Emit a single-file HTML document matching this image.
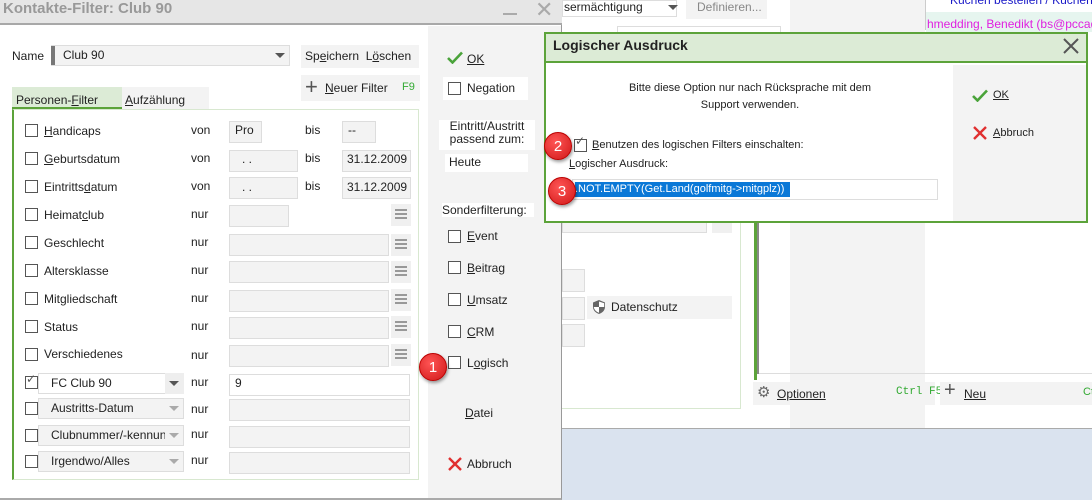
<!DOCTYPE html>
<html><head><meta charset="utf-8"><style>
*{box-sizing:border-box;margin:0;padding:0}
body{width:1092px;height:500px;position:relative;overflow:hidden;background:#fff;font-family:"Liberation Sans",sans-serif;font-size:12px;color:#222}
.a{position:absolute;white-space:nowrap}
.cb{position:absolute;width:13px;height:13px;border:1px solid #555;background:#fff}
.fld{position:absolute;background:#f3f3f3;border:1px solid #ddd}
.menu{position:absolute;width:20px;height:22px;background:#f0f0f0}
.menu:before{content:"";position:absolute;left:4px;top:5px;width:12px;height:10px;border-top:2px solid #999;border-bottom:2px solid #999;box-sizing:border-box}
.menu:after{content:"";position:absolute;left:4px;top:9px;width:12px;height:2px;background:#999}
.u{text-decoration:underline}
.badge{position:absolute;width:28px;height:28px;border-radius:50%;background:radial-gradient(circle at 40% 35%,#f55,#d01818);color:#fff;font-size:15px;text-align:center;line-height:28px;box-shadow:1px 2px 3px rgba(0,0,0,.4);border:1px solid #b00}
.tri{position:absolute;width:0;height:0;border-left:5px solid transparent;border-right:5px solid transparent;border-top:5px solid #555}
</style></head><body>

<!-- background window -->
<div class="a" style="left:562px;top:428px;width:530px;height:72px;background:#dae3ef;border-top:1px solid #aaa"></div>
<div class="a" style="left:562px;top:0;width:115px;height:17px;border:1px solid #ddd;background:#fff"></div>
<div class="a" style="left:564px;top:0;font-size:12px">sermächtigung</div>
<div class="tri" style="left:668px;top:5px"></div>
<div class="a" style="left:686px;top:0;width:81px;height:19px;background:#f3f3f3;color:#888;padding-left:11px">Definieren...</div>
<div class="a" style="left:790px;top:0;width:135px;height:428px;background:#f3f3f3"></div>
<div class="a" style="left:925px;top:0;width:1px;height:30px;background:#ccc"></div>
<div class="a" style="left:950px;top:-7px;color:#1a1ac8;font-size:12px">Küchen bestellen / Küchen</div>
<div class="a" style="left:926px;top:12px;width:166px;height:20px;background:#e6f5ef"></div>
<div class="a" style="left:927px;top:17px;color:#e020e0;font-size:12px">hmedding, Benedikt (bs@pccado</div>
<div class="a" style="left:617px;top:26px;width:164px;height:10px;border:1px solid #ddd"></div>
<div class="a" style="left:562px;top:36px;width:179px;height:373px;border-right:1px solid #d8e8d0;border-bottom:1px solid #d8e8d0"></div>
<div class="fld" style="left:562px;top:220px;width:145px;height:13px"></div>
<div class="a" style="left:712px;top:220px;width:20px;height:13px;background:#f0f0f0"></div>
<div class="fld" style="left:562px;top:269px;width:23px;height:23px"></div>
<div class="fld" style="left:562px;top:297px;width:23px;height:23px"></div>
<div class="fld" style="left:562px;top:324px;width:23px;height:23px"></div>
<div class="a" style="left:587px;top:296px;width:145px;height:23px;background:#f3f3f3"></div>
<svg class="a" style="left:592px;top:299px" width="14" height="16" viewBox="0 0 14 16"><path d="M7 1L1 3.5V8c0 3.5 3 6 6 7 3-1 6-3.5 6-7V3.5z" fill="#666"/><path d="M7 2.5V8H1.8c.3 2.8 2.6 4.8 5.2 5.8V8h5.2V4.2z" fill="#fff"/></svg>
<div class="a" style="left:611px;top:300px;font-size:12px">Datenschutz</div>
<div class="a" style="left:754px;top:222px;width:3px;height:158px;background:#5ca33a"></div>
<div class="a" style="left:757px;top:222px;width:2px;height:152px;background:#888"></div>
<div class="a" style="left:759px;top:373px;width:333px;height:1px;background:#ddd"></div>
<div class="a" style="left:753px;top:382px;width:182px;height:23px;background:#f3f3f3"></div>
<div class="a" style="left:757px;top:383px;color:#666;font-size:15px">⚙</div>
<div class="a u" style="left:777px;top:387px">Optionen</div>
<div class="a" style="left:896px;top:386px;color:#3a3;font-family:'Liberation Mono',monospace;font-size:11px">Ctrl F5</div>
<div class="a" style="left:940px;top:382px;width:152px;height:23px;background:#f3f3f3"></div>
<div class="a" style="left:944px;top:379px;font-size:20px;color:#555">+</div>
<div class="a u" style="left:964px;top:387px">Neu</div>
<div class="a" style="left:1083px;top:386px;color:#3a3;font-size:11px">Ct</div>

<!-- main dialog -->
<div class="a" style="left:0;top:0;width:562px;height:500px;background:#fff;border-right:1px solid #999;border-bottom:2px solid #aaa"></div>
<div class="a" style="left:0;top:0;width:562px;height:25px;background:#e6e6e6;border-bottom:2px solid #a8a8a8"></div>
<div class="a" style="left:3px;top:0;font-size:15px;font-weight:bold;color:#999">Kontakte-Filter: Club 90</div>
<div class="a" style="left:503px;top:13px;width:14px;height:2px;background:#aaa"></div>
<div class="a" style="left:535px;top:-3px;font-size:22px;color:#aaa">✕</div>
<div class="a" style="left:428px;top:26px;width:133px;height:472px;background:#f3f3f3"></div>

<div class="a" style="left:12px;top:49px">Name</div>
<div class="a" style="left:51px;top:45px;width:239px;height:21px;background:#f3f3f3;border:1px solid #ddd"></div>
<div class="a" style="left:51px;top:46px;width:4px;height:19px;background:#777"></div>
<div class="a" style="left:63px;top:48px">Club 90</div>
<div class="tri" style="left:275px;top:53px"></div>
<div class="a" style="left:301px;top:45px;width:118px;height:23px;background:#f3f3f3"></div>
<div class="a" style="left:305px;top:49px;font-size:12px">Sp<span class="u">e</span>ichern&nbsp; L<span class="u">ö</span>schen</div>
<div class="a" style="left:301px;top:75px;width:119px;height:26px;background:#f3f3f3"></div>
<div class="a" style="left:305px;top:74px;font-size:22px;color:#555">+</div>
<div class="a" style="left:325px;top:81px"><span class="u">N</span>euer Filter</div>
<div class="a" style="left:402px;top:81px;color:#3a3;font-size:11px">F9</div>

<div class="a" style="left:12px;top:87px;width:110px;height:22px;background:#dcebd6;border-bottom:2px solid #5ca33a"></div>
<div class="a" style="left:16px;top:93px">Personen-<span class="u">F</span>ilter</div>
<div class="a" style="left:122px;top:87px;width:87px;height:22px;background:#f3f3f3"></div>
<div class="a" style="left:125px;top:93px"><span class="u">A</span>ufzählung</div>
<div class="a" style="left:12px;top:109px;width:407px;height:371px;border:1px solid #d8e8d0;border-left:2px solid #5ca33a"></div>

<!-- rows -->
<div class="cb" style="left:25px;top:124px"></div><div class="a" style="left:44px;top:124px"><span class="u">H</span>andicaps</div>
<div class="a" style="left:191px;top:123px">von</div><div class="fld" style="left:229px;top:121px;width:33px;height:22px"></div><div class="a" style="left:235px;top:123px">Pro</div>
<div class="a" style="left:305px;top:123px">bis</div><div class="fld" style="left:342px;top:121px;width:34px;height:22px"></div><div class="a" style="left:348px;top:123px">--</div>

<div class="cb" style="left:25px;top:152px"></div><div class="a" style="left:44px;top:152px"><span class="u">G</span>eburtsdatum</div>
<div class="a" style="left:191px;top:151px">von</div><div class="fld" style="left:229px;top:150px;width:69px;height:22px"></div><div class="a" style="left:242px;top:152px">. .</div>
<div class="a" style="left:305px;top:151px">bis</div><div class="fld" style="left:342px;top:150px;width:69px;height:22px"></div><div class="a" style="left:347px;top:152px">31.12.2009</div>

<div class="cb" style="left:25px;top:180px"></div><div class="a" style="left:44px;top:180px">Eintritts<span class="u">d</span>atum</div>
<div class="a" style="left:191px;top:179px">von</div><div class="fld" style="left:229px;top:177px;width:69px;height:22px"></div><div class="a" style="left:242px;top:180px">. .</div>
<div class="a" style="left:305px;top:179px">bis</div><div class="fld" style="left:342px;top:177px;width:69px;height:22px"></div><div class="a" style="left:347px;top:180px">31.12.2009</div>

<div class="cb" style="left:25px;top:208px"></div><div class="a" style="left:44px;top:208px">Heimat<span class="u">c</span>lub</div>
<div class="a" style="left:191px;top:207px">nur</div><div class="fld" style="left:229px;top:205px;width:60px;height:22px"></div><div class="menu" style="left:391px;top:204px"></div>

<div class="cb" style="left:25px;top:236px"></div><div class="a" style="left:44px;top:236px">Geschlecht</div>
<div class="a" style="left:191px;top:235px">nur</div><div class="fld" style="left:229px;top:234px;width:160px;height:22px"></div><div class="menu" style="left:391px;top:234px"></div>

<div class="cb" style="left:25px;top:264px"></div><div class="a" style="left:44px;top:264px">Altersklasse</div>
<div class="a" style="left:191px;top:263px">nur</div><div class="fld" style="left:229px;top:261px;width:160px;height:22px"></div><div class="menu" style="left:391px;top:261px"></div>

<div class="cb" style="left:25px;top:292px"></div><div class="a" style="left:44px;top:292px">Mitgliedschaft</div>
<div class="a" style="left:191px;top:291px">nur</div><div class="fld" style="left:229px;top:290px;width:160px;height:22px"></div><div class="menu" style="left:391px;top:289px"></div>

<div class="cb" style="left:25px;top:320px"></div><div class="a" style="left:44px;top:320px">Status</div>
<div class="a" style="left:191px;top:319px">nur</div><div class="fld" style="left:229px;top:317px;width:160px;height:22px"></div><div class="menu" style="left:391px;top:316px"></div>

<div class="cb" style="left:25px;top:348px"></div><div class="a" style="left:44px;top:347px">Verschiedenes</div>
<div class="a" style="left:191px;top:348px">nur</div><div class="fld" style="left:229px;top:345px;width:160px;height:22px"></div><div class="menu" style="left:391px;top:344px"></div>

<div class="cb" style="left:25px;top:376px"></div><div class="a" style="left:26px;top:372px;color:#555">✓</div>
<div class="a" style="left:38px;top:373px;width:146px;height:21px;background:#fff;border:1px solid #ddd"></div><div class="a" style="left:165px;top:373px;width:19px;height:21px;background:#eee"></div>
<div class="a" style="left:51px;top:376px">FC Club 90</div><div class="tri" style="left:169px;top:381px"></div>
<div class="a" style="left:191px;top:375px">nur</div><div class="a" style="left:229px;top:374px;width:181px;height:22px;border:1px solid #ddd"></div><div class="a" style="left:235px;top:376px">9</div>

<div class="cb" style="left:25px;top:402px"></div><div class="fld" style="left:38px;top:398px;width:146px;height:21px"></div>
<div class="a" style="left:51px;top:401px">Austritts-Datum</div><div class="tri" style="left:169px;top:406px;border-top-color:#aaa"></div>
<div class="a" style="left:191px;top:402px">nur</div><div class="fld" style="left:229px;top:399px;width:181px;height:22px"></div>

<div class="cb" style="left:25px;top:429px"></div><div class="fld" style="left:38px;top:425px;width:146px;height:21px"></div>
<div class="a" style="left:51px;top:428px;width:114px;overflow:hidden">Clubnummer/-kennun</div><div class="tri" style="left:169px;top:433px;border-top-color:#aaa"></div>
<div class="a" style="left:191px;top:427px">nur</div><div class="fld" style="left:229px;top:426px;width:181px;height:22px"></div>

<div class="cb" style="left:25px;top:455px"></div><div class="fld" style="left:38px;top:451px;width:146px;height:21px"></div>
<div class="a" style="left:51px;top:454px">Irgendwo/Alles</div><div class="tri" style="left:169px;top:459px;border-top-color:#aaa"></div>
<div class="a" style="left:191px;top:453px">nur</div><div class="fld" style="left:229px;top:452px;width:181px;height:22px"></div>

<!-- right panel -->
<svg class="a" style="left:447px;top:51px" width="16" height="13"><path d="M1 7l4.5 4.5L15 1.5" stroke="#4aa33a" stroke-width="2.6" fill="none"/></svg>
<div class="a u" style="left:467px;top:52px">OK</div>
<div class="a" style="left:443px;top:77px;width:85px;height:23px;background:#fff"></div>
<div class="cb" style="left:448px;top:82px"></div><div class="a" style="left:467px;top:81px">Negation</div>
<div class="a" style="left:439px;top:120px;width:96px;height:30px;background:#fff;text-align:center;line-height:13px">Eintritt/Austritt<br>passend zum:</div>
<div class="a" style="left:445px;top:154px;width:83px;height:18px;background:#fff;padding:1px 4px">Heute</div>
<div class="a" style="left:442px;top:203px;width:92px;height:14px;background:#fff">Sonderfilterung:</div>
<div class="cb" style="left:448px;top:230px"></div><div class="a" style="left:467px;top:229px"><span class="u">E</span>vent</div>
<div class="cb" style="left:448px;top:261px"></div><div class="a" style="left:467px;top:261px"><span class="u">B</span>eitrag</div>
<div class="cb" style="left:448px;top:293px"></div><div class="a" style="left:467px;top:293px"><span class="u">U</span>msatz</div>
<div class="cb" style="left:448px;top:325px"></div><div class="a" style="left:467px;top:325px"><span class="u">C</span>RM</div>
<div class="cb" style="left:448px;top:356px"></div><div class="a" style="left:467px;top:356px">L<span class="u">o</span>gisch</div>
<div class="a" style="left:465px;top:406px"><span class="u">D</span>atei</div>
<svg class="a" style="left:448px;top:457px" width="14" height="14"><path d="M1 1l12 12M13 1L1 13" stroke="#e03030" stroke-width="2.4"/></svg>
<div class="a" style="left:467px;top:457px">Abbruch</div>
<div class="badge" style="left:419px;top:353px">1</div>

<!-- logical dialog -->
<div class="a" style="left:544px;top:32px;width:544px;height:191px;background:#fff;border:2px solid #5ca33a"></div>
<div class="a" style="left:546px;top:34px;width:540px;height:29px;background:#dcebd6;border-bottom:2px solid #5ca33a"></div>
<div class="a" style="left:553px;top:37px;font-size:14px;font-weight:bold;color:#222">Logischer Ausdruck</div>
<svg class="a" style="left:1063px;top:38px" width="16" height="16"><path d="M1 1l14 14M15 1L1 15" stroke="#555" stroke-width="2"/></svg>
<div class="a" style="left:953px;top:65px;width:133px;height:156px;background:#f3f3f3"></div>
<div class="a" style="left:600px;top:80px;width:300px;text-align:center;font-size:11px;line-height:17px">Bitte diese Option nur nach Rücksprache mit dem<br>Support verwenden.</div>
<div class="cb" style="left:574px;top:139px"></div><div class="a" style="left:575px;top:134px;color:#555">✓</div>
<div class="a" style="left:592px;top:139px;font-size:11px"><span class="u">B</span>enutzen des logischen Filters einschalten:</div>
<div class="a" style="left:569px;top:158px;font-size:11px"><span class="u">L</span>ogischer Ausdruck:</div>
<div class="a" style="left:572px;top:179px;width:366px;height:21px;border:1px solid #ddd"></div>
<div class="a" style="left:575px;top:182px;width:215px;height:15px;background:#0a78d7;color:#fff;font-size:11px;line-height:15px">.NOT.EMPTY(Get.Land(golfmitg-&gt;mitgplz))</div>
<svg class="a" style="left:972px;top:89px" width="16" height="13"><path d="M1 7l4.5 4.5L15 1.5" stroke="#4aa33a" stroke-width="2.6" fill="none"/></svg>
<div class="a u" style="left:993px;top:89px;font-size:11px">OK</div>
<svg class="a" style="left:973px;top:126px" width="14" height="14"><path d="M1 1l12 12M13 1L1 13" stroke="#e03030" stroke-width="2.4"/></svg>
<div class="a" style="left:993px;top:127px;font-size:11px"><span class="u">A</span>bbruch</div>
<div class="badge" style="left:544px;top:132px">2</div>
<div class="badge" style="left:548px;top:177px">3</div>
</body></html>
